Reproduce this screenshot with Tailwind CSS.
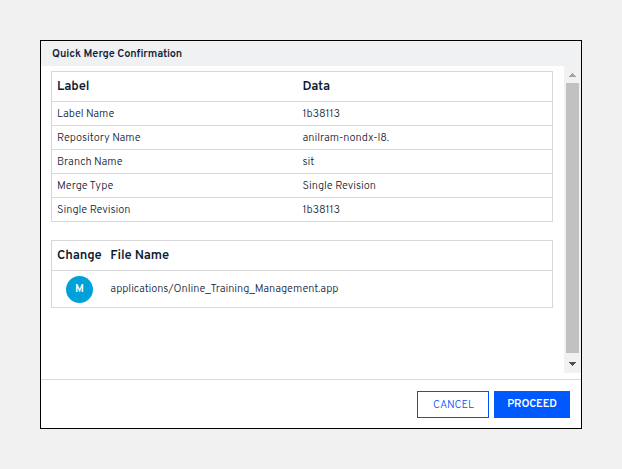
<!DOCTYPE html>
<html lang="en">
<head>
<meta charset="utf-8">
<title>Quick Merge Confirmation</title>
<script src="https://cdn.jsdelivr.net/npm/@tailwindcss/browser@4"></script>
</head>
<body class="bg-[#f1f1f1] p-10 h-[469px] overflow-hidden font-[Overpass,Roboto,sans-serif] text-[11px] font-light tracking-[-0.05px] text-[#152238]">
<section class="w-[542px] h-[389px] border border-black bg-white flex flex-col">
  <header class="h-[25px] shrink-0 bg-[#f0f1f3] px-[11px] pt-[2px] flex items-center text-[11px] font-semibold tracking-[-0.07px] text-[#152238]"><h1>Quick Merge Confirmation</h1></header>
  <div class="h-[307px] shrink-0 flex justify-between">
    <main class="pl-[10px] pt-[5px] flex flex-col gap-[18px]">
      <div class="w-[502px] border border-[#d8d8d8] divide-y divide-[#d8d8d8]">
        <div class="h-[30px] grid grid-cols-[245.5px_1fr] items-center pl-[5px] pt-[2px] text-[13px] font-semibold tracking-[-0.1px] text-[#0b1a33]"><span>Label</span><span>Data</span></div>
        <div class="h-[24px] grid grid-cols-[245.5px_1fr] items-center pl-[5px] pt-[2px]"><span>Label Name</span><span>1b38113</span></div>
        <div class="h-[24px] grid grid-cols-[245.5px_1fr] items-center pl-[5px] pt-[2px]"><span>Repository Name</span><span>anilram-nondx-l8.</span></div>
        <div class="h-[24px] grid grid-cols-[245.5px_1fr] items-center pl-[5px] pt-[2px]"><span>Branch Name</span><span>sit</span></div>
        <div class="h-[24px] grid grid-cols-[245.5px_1fr] items-center pl-[5px] pt-[2px]"><span>Merge Type</span><span>Single Revision</span></div>
        <div class="h-[23px] grid grid-cols-[245.5px_1fr] items-center pl-[5px] pt-[2px]"><span>Single Revision</span><span>1b38113</span></div>
      </div>
      <div class="w-[502px] border border-[#d8d8d8] divide-y divide-[#d8d8d8]">
        <div class="h-[30px] grid grid-cols-[53.3px_1fr] items-center pl-[5px] pt-[2px] text-[13px] font-semibold tracking-[-0.12px] text-[#0b1a33]"><span>Change</span><span>File Name</span></div>
        <div class="h-[36px] grid grid-cols-[53.3px_1fr] items-center pl-[5px] pt-px"><span class="ml-[9px] size-[27px] rounded-full bg-[#00a1d9] text-white font-semibold text-[11px] flex items-center justify-center">M</span><span>applications/Online_Training_Management.app</span></div>
      </div>
    </main>
    <div class="w-[17px] bg-[#f1f1f1] flex flex-col items-center">
      <svg class="h-[17px] w-[17px] shrink-0" viewBox="0 0 17 17" shape-rendering="crispEdges"><path d="M8 7h1v1h1v1h1v1h1v1H5v-1h1V9h1V8h1z" fill="#a3a3a3"/></svg>
      <div class="w-[13px] h-[270px] bg-[#c1c1c1]"></div>
      <svg class="h-[20px] w-[17px] shrink-0" viewBox="0 0 17 20" shape-rendering="crispEdges"><path d="M5 9h7v1h-1v1h-1v1H9v1H8v-1H7v-1H6v-1H5z" fill="#505050"/></svg>
    </div>
  </div>
  <footer class="mt-[6px] grow border-t border-[#d8d8d8] pt-[11px] pr-[11px] flex justify-end items-start gap-[5px]">
    <button class="w-[72px] h-[27px] border border-[#0052ff] text-[#0052ff] text-[11px] pt-[2px] pl-px">CANCEL</button>
    <button class="w-[76px] h-[27px] bg-[#0059ff] text-white text-[11px] font-semibold tracking-[-0.15px]">PROCEED</button>
  </footer>
</section>
</body>
</html>
